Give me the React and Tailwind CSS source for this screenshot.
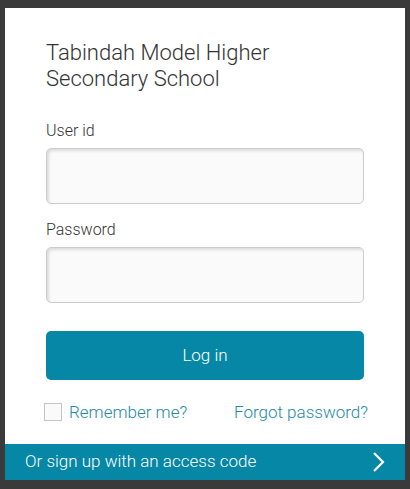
import React from "react";

export default function App() {
  return (
    <div className="w-[410px] h-[489px] bg-[#3a3a3a] pt-[8px] pl-[5px] overflow-hidden" style={{ fontFamily: "Roboto, 'Liberation Sans', sans-serif" }}>
      <div className="w-[400px] h-[472px] bg-white flex flex-col">
        <div className="flex-1 pl-[41px] pr-[41px] pt-[32px]">
          <h1 className="text-[22px] leading-[26px] font-light text-[#333333]">
            Tabindah Model Higher
            <br />
            Secondary School
          </h1>
          <label className="block mt-[27px] text-[16px] leading-[24px] font-light text-[#333333]">User id</label>
          <input
            type="text"
            className="block mt-[5px] w-[318px] h-[56px] rounded-[5px] border border-[#cccccc] bg-[#fafafa] shadow-[inset_2px_2px_3px_rgba(0,0,0,0.12)] outline-none"
          />
          <label className="block mt-[14px] text-[16px] leading-[24px] font-light text-[#333333]">Password</label>
          <input
            type="password"
            className="block mt-[5px] w-[318px] h-[56px] rounded-[5px] border border-[#cccccc] bg-[#fafafa] shadow-[inset_2px_2px_3px_rgba(0,0,0,0.12)] outline-none"
          />
          <button className="mt-[28px] w-[318px] h-[49px] rounded-[5px] bg-[#0787a6] text-white text-[17px] font-light">
            Log in
          </button>
          <div className="mt-[22px] flex items-center justify-between w-[324px] -ml-[2px]">
            <div className="flex items-center gap-[7px]">
              <span className="block w-[18px] h-[18px] border border-[#c4c4c4] bg-[#fafafa]"></span>
              <span className="text-[17px] leading-[20px] font-light text-[#1e8aa6]">Remember me?</span>
            </div>
            <span className="text-[17px] leading-[20px] font-light text-[#1e8aa6]">Forgot password?</span>
          </div>
        </div>
        <div className="h-[36px] bg-[#0787a6] flex items-center justify-between pl-[20px] pr-[19px]">
          <span className="text-white text-[17px] font-light">Or sign up with an access code</span>
          <svg width="14" height="22" viewBox="0 0 14 22" fill="none">
            <path d="M2 2 L11 11 L2 20" stroke="white" strokeWidth="2.2" />
          </svg>
        </div>
      </div>
    </div>
  );
}
